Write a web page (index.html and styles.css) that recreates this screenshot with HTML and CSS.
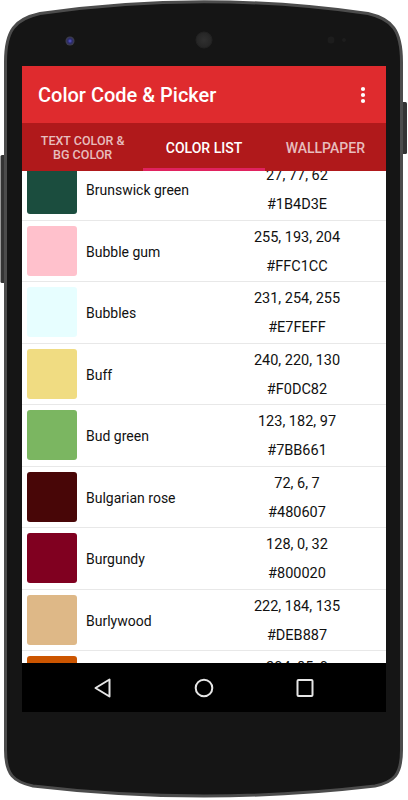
FILE: index.html
```html
<!DOCTYPE html>
<html lang="en">

<head>
    <meta charset="UTF-8">
    <meta name="viewport" content="width=device-width, initial-scale=1.0">
    <title>Color Code &amp; Picker</title>
    <link rel="stylesheet" href="styles.css">
</head>

<body>
    <div class="phone">
        <div class="screen">
            <!-- App bar -->
            <header class="appbar">
                <span class="title">Color Code &amp; Picker</span>
                <svg class="more" width="24" height="24" viewBox="0 0 24 24">
                    <circle cx="12" cy="6" r="2.1" fill="#fff" />
                    <circle cx="12" cy="12" r="2.1" fill="#fff" />
                    <circle cx="12" cy="18" r="2.1" fill="#fff" />
                </svg>
            </header>

            <!-- Tabs -->
            <nav class="tabs">
                <div class="tab">TEXT COLOR &amp;<br>BG COLOR</div>
                <div class="tab active">COLOR LIST</div>
                <div class="tab">WALLPAPER</div>
            </nav>

            <!-- Color list -->
            <ul class="color-list">
                <li class="color-row first">
                    <span class="swatch" style="background: #1B4D3E;"></span>
                    <span class="name">Brunswick green</span>
                    <span class="values">27, 77, 62<br>#1B4D3E</span>
                </li>
                <li class="color-row">
                    <span class="swatch" style="background: #FFC1CC;"></span>
                    <span class="name">Bubble gum</span>
                    <span class="values">255, 193, 204<br>#FFC1CC</span>
                </li>
                <li class="color-row">
                    <span class="swatch" style="background: #E7FEFF;"></span>
                    <span class="name">Bubbles</span>
                    <span class="values">231, 254, 255<br>#E7FEFF</span>
                </li>
                <li class="color-row">
                    <span class="swatch" style="background: #F0DC82;"></span>
                    <span class="name">Buff</span>
                    <span class="values">240, 220, 130<br>#F0DC82</span>
                </li>
                <li class="color-row">
                    <span class="swatch" style="background: #7BB661;"></span>
                    <span class="name">Bud green</span>
                    <span class="values">123, 182, 97<br>#7BB661</span>
                </li>
                <li class="color-row">
                    <span class="swatch" style="background: #480607;"></span>
                    <span class="name">Bulgarian rose</span>
                    <span class="values">72, 6, 7<br>#480607</span>
                </li>
                <li class="color-row">
                    <span class="swatch" style="background: #800020;"></span>
                    <span class="name">Burgundy</span>
                    <span class="values">128, 0, 32<br>#800020</span>
                </li>
                <li class="color-row">
                    <span class="swatch" style="background: #DEB887;"></span>
                    <span class="name">Burlywood</span>
                    <span class="values">222, 184, 135<br>#DEB887</span>
                </li>
                <li class="color-row">
                    <span class="swatch" style="background: #CC5500;"></span>
                    <span class="name">Burnt orange</span>
                    <span class="values">204, 85, 0<br>#CC5500</span>
                </li>
            </ul>

            <!-- System navigation -->
            <div class="navbar">
                <svg width="24" height="24" viewBox="0 0 24 24">
                    <path d="M4.5 12 L18.5 3.5 L18.5 20.5 Z" fill="none" stroke="#e6e6e6" stroke-width="2" stroke-linejoin="round" />
                </svg>
                <svg width="24" height="24" viewBox="0 0 24 24">
                    <circle cx="12" cy="12" r="8.3" fill="none" stroke="#e6e6e6" stroke-width="2" />
                </svg>
                <svg width="24" height="24" viewBox="0 0 24 24">
                    <rect x="4.5" y="4" width="15" height="16" rx="1" fill="none" stroke="#e6e6e6" stroke-width="2" />
                </svg>
            </div>
        </div>
    </div>
</body>

</html>
```

FILE: styles.css
```css
body {
    margin: 0;
    font-family: Roboto, 'Noto Sans', sans-serif;
    background: #fff;
}

.phone {
    width: 408px;
    height: 800px;
    box-sizing: border-box;
    padding: 66px 22px 88px;
    background: url("data:image/svg+xml;utf8,<svg xmlns='http://www.w3.org/2000/svg' width='408' height='800' viewBox='0 0 408 800'><defs><radialGradient id='g'><stop offset='0' stop-color='%23303030'/><stop offset='1' stop-color='%23252525'/></radialGradient><radialGradient id='l'><stop offset='0' stop-color='%235a5ad0'/><stop offset='0.5' stop-color='%232a2a6a'/><stop offset='1' stop-color='%23404048'/></radialGradient></defs><rect x='401' y='102' width='6' height='52' rx='1.5' fill='%23343434'/><rect x='0.5' y='155' width='6' height='128' rx='1.5' fill='%23343434'/><path d='M5.5,62 C5.5,30 15,19 40,13.5 Q204,-10 368,13.5 C392,19 401.5,30 401.5,62 L401.5,750 C401.5,775 394,782 375,786 Q204,806 33,786 C14,782 5.5,775 5.5,750 Z' fill='%23151515' stroke='%234c4c4c' stroke-width='3'/><circle cx='70' cy='41' r='4.5' fill='url(%23l)'/><circle cx='204' cy='40' r='8' fill='url(%23g)' stroke='%23222' stroke-width='1'/><circle cx='331' cy='40' r='3.5' fill='%231d1d1d'/><circle cx='344' cy='40' r='2' fill='%231d1d1d'/></svg>") no-repeat;
}

.screen {
    height: 100%;
    display: flex;
    flex-direction: column;
    background: #fff;
    overflow: hidden;
}

.appbar {
    height: 57px;
    flex-shrink: 0;
    display: flex;
    align-items: center;
    justify-content: space-between;
    padding: 0 11px 0 16px;
    background-color: #df2b2e;
    color: #fff;
}

.title {
    font-size: 20px;
    font-weight: 500;
}

.tabs {
    height: 48px;
    flex-shrink: 0;
    display: flex;
    background-color: #b0191b;
}

.tab {
    flex: 1;
    display: flex;
    align-items: center;
    justify-content: center;
    text-align: center;
    font-size: 12.5px;
    font-weight: 500;
    line-height: 14px;
    color: rgba(255, 255, 255, 0.72);
    box-sizing: border-box;
    border-bottom: 3px solid transparent;
    padding-top: 5px;
}

.tab.active {
    color: #fff;
    font-size: 14px;
    border-bottom-color: #e0225f;
}

.tabs .tab:last-child {
    font-size: 14px;
}

.color-list {
    flex: 1;
    list-style-type: none;
    margin: 0;
    padding: 0;
    overflow: hidden;
}

.color-row {
    height: 60.5px;
    display: flex;
    align-items: center;
    padding-left: 5px;
    border-bottom: 1px solid #e8e8e8;
    color: #111;
    font-size: 14px;
}

.color-row.first {
    margin-top: -12px;
}

.swatch {
    width: 50px;
    height: 50px;
    border-radius: 3px;
    flex-shrink: 0;
}

.name {
    flex: 1;
    margin-left: 9px;
    padding-top: 2px;
}

.values {
    width: 178px;
    text-align: center;
    line-height: 29px;
    font-size: 14.5px;
    padding-top: 2px;
}

.navbar {
    height: 49px;
    flex-shrink: 0;
    display: flex;
    align-items: center;
    justify-content: center;
    gap: 77px;
    background: #000;
}
```
